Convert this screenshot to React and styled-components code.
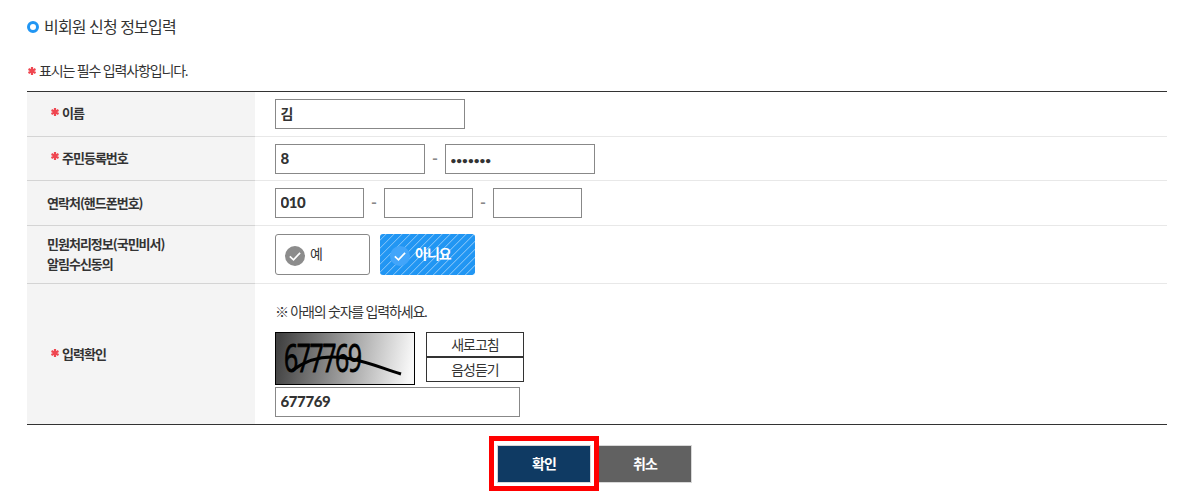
import React from "react"
import styled, { createGlobalStyle } from "styled-components"

const GlobalStyle = createGlobalStyle`
  *, *::before {
    box-sizing: border-box;
  }
  body {
    margin: 0;
    background: #fff;
    color: #333;
    font-family: Lato, "Noto Sans CJK KR", sans-serif;
    font-size: 13px;
    letter-spacing: -1px;
  }
  input,
  button {
    font-family: inherit;
    color: inherit;
  }
`

const Page = styled.main`
  width: 1188px;
  height: 502px;
  padding: 15px 21px 0 27px;
  overflow: hidden;
`

const Title = styled.h1`
  display: flex;
  align-items: center;
  gap: 5px;
  height: 24px;
  margin: 0;
  font-size: 16px;
  font-weight: 400;
  letter-spacing: -0.8px;

  &::before {
    content: "";
    width: 12px;
    height: 12px;
    border: 3px solid #2196f3;
    border-radius: 50%;
  }
  span {
    padding-bottom: 2px;
  }
`

const Notice = styled.p`
  display: flex;
  align-items: center;
  gap: 3px;
  height: 20px;
  margin: 22px 0 10px;
  padding-left: 1px;
  font-size: 14px;
  letter-spacing: -1.12px;

  span {
    padding-bottom: 2px;
  }
`

const Star = styled.svg`
  flex: none;
  width: 8px;
  height: 8px;
  stroke: #ef4650;
  stroke-width: 2.2;
`

const Table = styled.div`
  border-top: 1px solid #333;
  border-bottom: 1px solid #333;
`

const Row = styled.div`
  display: grid;
  grid-template-columns: 228px 1fr;
  height: ${(p) => p.$height}px;
`

const Label = styled.div`
  display: flex;
  align-items: center;
  gap: 3px;
  padding-left: ${(p) => (p.$required ? 24 : 20)}px;
  padding-bottom: ${(p) => (p.$last ? 0 : p.$required ? 2 : 1)}px;
  background: #f4f4f4;
  border-bottom: ${(p) => (p.$last ? 0 : 1)}px solid #d4d4d4;
  font-family: "Noto Sans CJK KR", sans-serif;
  font-weight: 700;
  line-height: 20px;

  svg {
    margin-top: -3px;
  }
`

const Field = styled.div`
  display: flex;
  flex-direction: ${(p) => (p.$column ? "column" : "row")};
  align-items: flex-start;
  padding: ${(p) => p.$top}px 0 0 20px;
  border-bottom: ${(p) => (p.$last ? 0 : 1)}px solid #e8e8e8;
`

const Input = styled.input`
  width: ${(p) => p.$width}px;
  height: 30px;
  padding: 0 5px 2px 4.5px;
  border: 1px solid #888;
  border-radius: 0;
  outline: 0;
  background: #fff;
  font-size: 15px;
  font-weight: 900;
  letter-spacing: -0.4px;

  &[type="password"] {
    padding-top: 3px;
    font-size: 10px;
    font-weight: 700;
    letter-spacing: 0;
  }
`

const NameInput = styled(Input)`
  padding-bottom: 3px;
  font-size: 14px;
  font-weight: 700;
`

const Dash = styled.span`
  width: 20px;
  line-height: 28px;
  text-align: center;
  color: #888;
  font-size: 16px;
  font-weight: 700;
  letter-spacing: 0;
`

const Choice = styled.button`
  display: flex;
  align-items: center;
  gap: 5px;
  width: 95px;
  height: 41px;
  margin-right: 10px;
  padding: 0 0 0 ${(p) => (p.$active ? 10 : 9)}px;
  border: ${(p) => (p.$active ? 0 : 1)}px solid #888;
  border-radius: 3px;
  background: ${(p) =>
    p.$active
      ? "repeating-linear-gradient(135deg, #2196f3 0 4px, #75bdf8 4.2px 4.8px, #2196f3 5px 5.66px)"
      : "#fff"};
  color: ${(p) => (p.$active ? "#fff" : "#333")};
  font-size: 14px;
  font-weight: ${(p) => (p.$active ? 700 : 400)};
  letter-spacing: -1px;

  svg {
    flex: none;
    margin-top: 2px;
  }
  span {
    padding-bottom: 4px;
  }
`

const Guide = styled.p`
  margin: 0;
  height: 20px;
  font-size: 14px;
  line-height: 20px;
  letter-spacing: -1.15px;
`

const CaptchaRow = styled.div`
  display: flex;
  gap: 11px;
  height: 55px;
  margin-top: 10px;
`

const Captcha = styled.svg`
  width: 140px;
  height: 53px;
  overflow: visible;
  border: 1px solid #000;
  background: linear-gradient(100deg, #424242 3%, #f8f8f8 96%);
`

const CaptchaButtons = styled.div`
  display: flex;
  flex-direction: column;
`

const SmallButton = styled.button`
  width: 98px;
  height: 25px;
  padding: 0;
  border: 1px solid #333;
  background: #fff;
  font-size: 14px;
  line-height: 20px;
  letter-spacing: -1px;
`

const Actions = styled.div`
  display: flex;
  justify-content: center;
  gap: 7px;
  padding: 20px 5px 0 0;
`

const ActionButton = styled.button`
  position: relative;
  width: 94px;
  height: 38px;
  padding: 0 0 2px;
  border: 1px solid #d8d8d8;
  background: ${(p) => (p.$primary ? "#0f3a63" : "#616161")};
  color: #fff;
  font-size: 14px;
  font-weight: 700;
  letter-spacing: -1px;
`

/* outline drawn over the gap around the confirm button */
const Highlight = styled.span`
  position: absolute;
  z-index: 1;
  top: -10px;
  left: -9px;
  width: 110px;
  height: 55px;
  border: 5px solid #f00;
`

const Required = () => (
  <Star viewBox="0 0 8 8">
    <path d="M4 0v8M.5 2l7 4M7.5 2l-7 4" />
  </Star>
)

const Check = ({ active }) => (
  <svg width="20" height="20" viewBox="0 0 20 20" fill="none">
    <circle cx="10" cy="10" r="10" fill={active ? "#42a5fa" : "#8c8c8c"} />
    <path d="M4.8 10.4l3.7 3.4 6.6-7" stroke="#fff" strokeWidth="1.7" />
  </svg>
)

const App = () => {
  return (
    <>
      <GlobalStyle />
      <Page>
        <Title>
          <span>비회원 신청 정보입력</span>
        </Title>
        <Notice>
          <Required />
          <span>표시는 필수 입력사항입니다.</span>
        </Notice>
        <Table>
          <Row $height={45}>
            <Label $required>
              <Required />
              이름
            </Label>
            <Field $top={7}>
              <NameInput $width={190} defaultValue="김" />
            </Field>
          </Row>
          <Row $height={44}>
            <Label $required>
              <Required />
              주민등록번호
            </Label>
            <Field $top={7}>
              <Input $width={150} defaultValue="8" />
              <Dash>-</Dash>
              <Input $width={150} type="password" defaultValue="0000000" />
            </Field>
          </Row>
          <Row $height={45}>
            <Label>연락처(핸드폰번호)</Label>
            <Field $top={7}>
              <Input $width={89} defaultValue="010" />
              <Dash>-</Dash>
              <Input $width={89} />
              <Dash>-</Dash>
              <Input $width={89} />
            </Field>
          </Row>
          <Row $height={58}>
            <Label>
              민원처리정보(국민비서)
              <br />
              알림수신동의
            </Label>
            <Field $top={8}>
              <Choice>
                <Check />
                <span>예</span>
              </Choice>
              <Choice $active>
                <Check active />
                <span>아니요</span>
              </Choice>
            </Field>
          </Row>
          <Row $height={140}>
            <Label $required $last>
              <Required />
              입력확인
            </Label>
            <Field $top={18} $column $last>
              <Guide>※ 아래의 숫자를 입력하세요.</Guide>
              <CaptchaRow>
                <Captcha viewBox="0 0 138 51">
                  <text
                    transform="translate(8 39) scale(.64 1)"
                    fontFamily="Open Sans"
                    fontSize="39"
                    letterSpacing="-2.4"
                    stroke="#000"
                    strokeWidth="0.9"
                  >
                    677769
                  </text>
                  <path
                    d="M17 37C34 24 54 22 73 25.500S103 34 125 41"
                    fill="none"
                    stroke="#000"
                    strokeWidth="3"
                  />
                </Captcha>
                <CaptchaButtons>
                  <SmallButton>새로고침</SmallButton>
                  <SmallButton>음성듣기</SmallButton>
                </CaptchaButtons>
              </CaptchaRow>
              <Input $width={245} defaultValue="677769" />
            </Field>
          </Row>
        </Table>
        <Actions>
          <ActionButton $primary>
            확인
            <Highlight />
          </ActionButton>
          <ActionButton>취소</ActionButton>
        </Actions>
      </Page>
    </>
  )
}

export default App
